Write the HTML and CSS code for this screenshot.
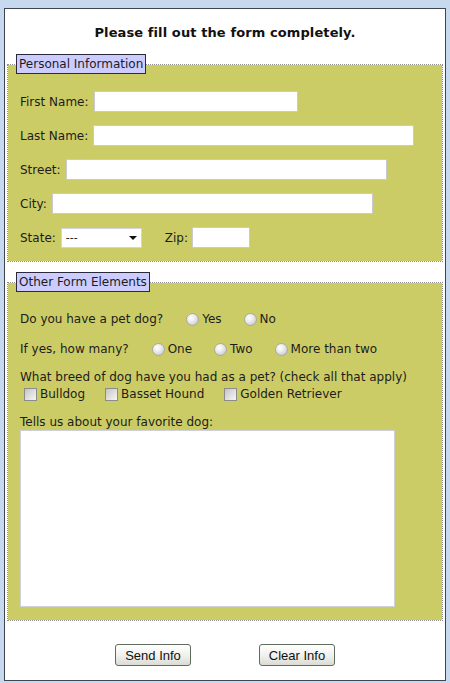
FILE: index.html
```html
<!DOCTYPE html>
<html lang="en">
<head>
<meta charset="utf-8">
<title>Form</title>
<link rel="stylesheet" href="styles.css">
</head>
<body>
<div class="page">
  <h1 class="title">Please fill out the form completely.</h1>
  <form class="form">
    <fieldset class="group">
      <legend class="group-legend">Personal Information</legend>
      <div class="group-body rows">
        <div class="row"><label class="lbl">First Name:</label><input type="text" class="txt w-first"></div>
        <div class="row"><label class="lbl">Last Name:</label><input type="text" class="txt w-wide"></div>
        <div class="row"><label class="lbl">Street:</label><input type="text" class="txt w-wide"></div>
        <div class="row"><label class="lbl">City:</label><input type="text" class="txt w-wide"></div>
        <div class="row">
          <label class="lbl">State:</label>
          <span class="select-wrap"><select class="sel"><option>---</option></select></span>
          <label class="lbl zip-lbl">Zip:</label><input type="text" class="txt w-zip">
        </div>
      </div>
    </fieldset>

    <fieldset class="group group-other">
      <legend class="group-legend">Other Form Elements</legend>
      <div class="group-body">
        <div class="row q-row">
          <span class="q">Do you have a pet dog?</span>
          <label class="opt"><input type="radio" name="pet" class="radio">Yes</label>
          <label class="opt"><input type="radio" name="pet" class="radio">No</label>
        </div>
        <div class="row q-row q-row2">
          <span class="q">If yes, how many?</span>
          <label class="opt"><input type="radio" name="many" class="radio">One</label>
          <label class="opt"><input type="radio" name="many" class="radio">Two</label>
          <label class="opt"><input type="radio" name="many" class="radio">More than two</label>
        </div>
        <div class="line breed">What breed of dog have you had as a pet? (check all that apply)</div>
        <div class="checks">
          <label class="chk"><input type="checkbox" class="box">Bulldog</label>
          <label class="chk"><input type="checkbox" class="box">Basset Hound</label>
          <label class="chk"><input type="checkbox" class="box">Golden Retriever</label>
        </div>
        <div class="line tell">Tells us about your favorite dog:</div>
        <textarea class="area"></textarea>
      </div>
    </fieldset>

    <div class="buttons">
      <button type="button" class="btn">Send Info</button>
      <button type="button" class="btn">Clear Info</button>
    </div>
  </form>
</div>
</body>
</html>
```

FILE: styles.css
```css
html, body {
  margin: 0;
  padding: 0;
}
body {
  background: #c6d9ef;
  font-family: "DejaVu Sans", Verdana, sans-serif;
  font-size: 12px;
  color: #1c1c1c;
}
.page {
  box-sizing: border-box;
  width: 442px;
  margin: 8px 0 0 4px;
  padding: 0 2px 14px;
  background: #fff;
  border: 1px solid #3f4650;
}
.title {
  margin: 0 0 12px;
  padding-top: 15px;
  font-size: 13px;
  line-height: 18px;
  font-weight: bold;
  text-align: center;
  color: #111;
  letter-spacing: 0.1px;
}
.form {
  margin: 0;
}
.group {
  margin: 0;
  padding: 0 8px;
  border: 1px dotted #8f8f8f;
  background: #cccc66;
  background-clip: padding-box;
  min-width: 0;
}
.group-other {
  margin-top: 10px;
}
.group-legend {
  padding: 0 2px;
  border: 1px solid #2a2a3a;
  background: #ccccff;
  line-height: 18px;
  font-size: 12px;
  color: #1c1c1c;
}
.group-body {
  padding: 17px 4px 13px;
}
.rows {
  display: flex;
  flex-direction: column;
  gap: 13px;
}
.row {
  display: flex;
  align-items: center;
  height: 21px;
}
.lbl {
  margin-right: 5px;
}
.txt {
  box-sizing: border-box;
  height: 21px;
  margin: 0;
  padding: 1px 3px;
  border: 1px solid #c9c9d2;
  background: #fff;
  font: 12px "DejaVu Sans", sans-serif;
}
.w-first { width: 204px; }
.w-wide { width: 321px; }
.w-zip { width: 58px; }
.select-wrap {
  position: relative;
  display: inline-block;
}
.sel {
  -webkit-appearance: none;
  appearance: none;
  box-sizing: border-box;
  width: 81px;
  height: 20px;
  margin: 0;
  padding: 0 0 0 4px;
  border: 1px solid #d4d4dc;
  border-radius: 0;
  background: #fff;
  font: 11px "DejaVu Sans", sans-serif;
  color: #111;
}
.select-wrap::after {
  content: "";
  position: absolute;
  right: 5px;
  top: 8px;
  border-left: 4px solid transparent;
  border-right: 4px solid transparent;
  border-top: 4px solid #111;
  pointer-events: none;
}
.zip-lbl {
  margin-left: 23px;
  margin-right: 4px;
}

/* Other form elements */
.q-row {
  height: 20px;
}
.q-row2 {
  margin-top: 10px;
}
.q {
  margin-right: 23px;
}
.opt {
  display: inline-flex;
  align-items: center;
  margin-right: 22px;
}
.chk {
  display: inline-flex;
  align-items: center;
  margin-right: 20px;
}
.radio {
  -webkit-appearance: none;
  appearance: none;
  box-sizing: border-box;
  width: 13px;
  height: 13px;
  margin: 0 3px 0 0;
  border: 1px solid #a9a9a9;
  border-radius: 50%;
  background: radial-gradient(circle at 38% 35%, #ffffff 0%, #eeeeee 35%, #cfcfcf 75%, #bdbdbd 100%);
}
.line {
  line-height: 16px;
}
.breed {
  margin-top: 10px;
}
.checks {
  display: flex;
  align-items: center;
  height: 18px;
  padding-left: 4px;
}
.box {
  -webkit-appearance: none;
  appearance: none;
  box-sizing: border-box;
  width: 13px;
  height: 13px;
  margin: 0 3px 0 0;
  border: 1px solid #8c8c8c;
  border-radius: 0;
  background: linear-gradient(135deg, #c4c4c4 0%, #dedede 50%, #f7f7f7 100%);
}
.tell {
  margin-top: 11px;
}
.area {
  display: block;
  box-sizing: border-box;
  width: 375px;
  height: 177px;
  margin: 0;
  padding: 2px;
  border: 1px solid #d0d0d8;
  background: #fff;
  resize: none;
  font: 12px "DejaVu Sans", sans-serif;
}

/* Buttons */
.buttons {
  display: flex;
  justify-content: center;
  gap: 68px;
  margin-top: 23px;
}
.btn {
  box-sizing: border-box;
  width: 76px;
  height: 22px;
  margin: 0;
  padding: 0;
  border: 1px solid #5f6d5f;
  border-radius: 3px;
  background: linear-gradient(#ffffff 0%, #f1f1ee 50%, #dcdcd6 100%);
  font: 13px "Liberation Sans", Arial, sans-serif;
  color: #111;
}
```
